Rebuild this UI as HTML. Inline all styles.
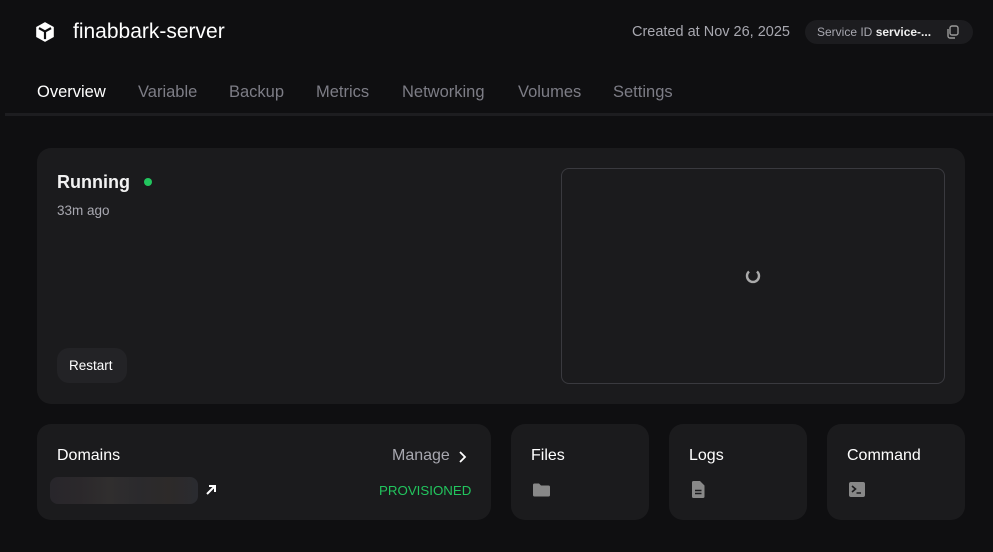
<!DOCTYPE html>
<html><head><style>
*{box-sizing:border-box;margin:0;padding:0}
body{width:993px;height:552px;background:#0f0f11;font-family:"Liberation Sans",sans-serif;position:relative;overflow:hidden;color:#f2f2f2}
.a{position:absolute;white-space:nowrap}
.card{position:absolute;background:#1b1b1d;border-radius:14px}
.tab{position:absolute;top:83px;font-size:16.5px;color:#7d7d86}
</style></head><body>
<svg class="a" style="left:34px;top:21px" width="22" height="22" viewBox="0 0 20 20"><path d="M10 1 L18 5.5 V14.5 L10 19 L2 14.5 V5.5 Z" fill="#fff"/><path d="M4.5 6.5 L10 9.5 L15.5 6.5 M10 9.5 V16.5" stroke="#0f0f11" stroke-width="2" fill="none"/></svg>
<div class="a" style="left:73px;top:20px;font-size:21px;color:#fff">finabbark-server</div>
<div class="a" style="left:632px;top:24px;font-size:14.5px;color:#a8a8b0">Created at Nov 26, 2025</div>
<div class="a" style="left:805px;top:20px;width:168px;height:24px;border-radius:12px;background:#1c1c1f"></div>
<div class="a" style="left:817px;top:25px;font-size:12px;color:#a8a8b0">Service ID <b style="color:#eee">service-...</b></div>
<svg class="a" style="left:946px;top:25px" width="14" height="14" viewBox="0 0 14 14"><rect x="4" y="1" width="8" height="9" rx="2" fill="none" stroke="#999" stroke-width="1.4"/><path d="M2 4 V11 a2 2 0 0 0 2 2 H9" fill="none" stroke="#999" stroke-width="1.4"/></svg>
<div class="tab" style="left:37px;color:#fff">Overview</div>
<div class="tab" style="left:138px">Variable</div>
<div class="tab" style="left:229px">Backup</div>
<div class="tab" style="left:316px">Metrics</div>
<div class="tab" style="left:402px">Networking</div>
<div class="tab" style="left:518px">Volumes</div>
<div class="tab" style="left:613px">Settings</div>
<div class="a" style="left:5px;top:113px;width:988px;height:3px;background:#1d1d20"></div>

<div class="card" style="left:37px;top:148px;width:928px;height:256px"></div>
<div class="a" style="left:57px;top:172px;font-size:18px;font-weight:bold;color:#f2f2f2">Running</div>
<div class="a" style="left:144px;top:178px;width:8px;height:8px;border-radius:50%;background:#22c55e"></div>
<div class="a" style="left:57px;top:203px;font-size:13.5px;color:#a8a8b0">33m ago</div>
<div class="a" style="left:57px;top:348px;width:70px;height:35px;border-radius:12px;background:#232326"></div>
<div class="a" style="left:69px;top:358px;font-size:13.5px;color:#fff">Restart</div>
<div class="a" style="left:561px;top:168px;width:384px;height:216px;border:1px solid #3a3a3f;border-radius:8px"></div>
<svg class="a" style="left:744px;top:267px" width="18" height="18" viewBox="0 0 18 18"><path d="M5 4.5 A6 6 0 1 0 13 4.5" fill="none" stroke="#aaa" stroke-width="2.4"/></svg>

<div class="card" style="left:37px;top:424px;width:454px;height:96px"></div>
<div class="a" style="left:57px;top:447px;font-size:16px;color:#fff">Domains</div>
<div class="a" style="left:392px;top:447px;font-size:16px;color:#a8a8b0">Manage</div>
<svg class="a" style="left:457px;top:450px" width="12" height="14" viewBox="0 0 12 14"><path d="M3 2 L8 7 L3 12" stroke="#fff" stroke-width="1.8" fill="none"/></svg>
<div class="a" style="left:50px;top:477px;width:148px;height:27px;border-radius:8px;background:linear-gradient(90deg,#28262b,#2b282b,#302e2e,#2b2a2d,#2d2a29,#2a2b30)"></div>
<svg class="a" style="left:205px;top:483px" width="13" height="13" viewBox="0 0 13 13"><path d="M2 11 L10 3 M4 3 H10 V9" stroke="#fff" stroke-width="2" fill="none"/></svg>
<div class="a" style="left:379px;top:483px;font-size:13.3px;color:#22c55e">PROVISIONED</div>

<div class="card" style="left:511px;top:424px;width:138px;height:96px"></div>
<div class="a" style="left:531px;top:447px;font-size:16px;color:#fff">Files</div>
<svg class="a" style="left:533px;top:483px" width="17" height="14" viewBox="0 0 17 14"><path d="M0 2 a1.5 1.5 0 0 1 1.5-1.5 H6 L8 2.5 H15.5 a1.5 1.5 0 0 1 1.5 1.5 V12 a1.5 1.5 0 0 1-1.5 1.5 H1.5 A1.5 1.5 0 0 1 0 12 Z" fill="#888"/></svg>
<div class="card" style="left:669px;top:424px;width:138px;height:96px"></div>
<div class="a" style="left:689px;top:447px;font-size:16px;color:#fff">Logs</div>
<svg class="a" style="left:692px;top:481px" width="13" height="17" viewBox="0 0 13 17"><path d="M1.5 0 H8 L12.5 4.5 V15.5 a1.5 1.5 0 0 1-1.5 1.5 H1.5 A1.5 1.5 0 0 1 0 15.5 V1.5 A1.5 1.5 0 0 1 1.5 0 Z" fill="#888"/><path d="M3 9.5 H9.5 M3 12.5 H9.5" stroke="#1b1b1d" stroke-width="1.4"/></svg>
<div class="card" style="left:827px;top:424px;width:138px;height:96px"></div>
<div class="a" style="left:847px;top:447px;font-size:16px;color:#fff">Command</div>
<svg class="a" style="left:849px;top:482px" width="16" height="15" viewBox="0 0 16 15"><rect width="16" height="15" rx="2" fill="#888"/><path d="M3 4 L6.5 7 L3 10 M7.5 11 H12" stroke="#1b1b1d" stroke-width="1.6" fill="none"/></svg>
</body></html>
